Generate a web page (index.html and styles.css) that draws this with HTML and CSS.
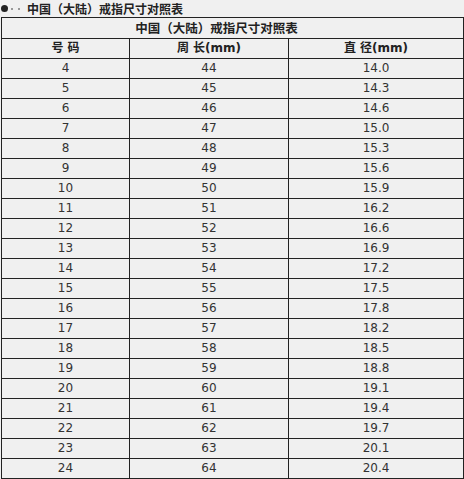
FILE: index.html
```html
<!DOCTYPE html>
<html lang="zh">
<head>
<meta charset="utf-8">
<title>中国（大陆）戒指尺寸对照表</title>
<link rel="stylesheet" href="styles.css">
</head>
<body>
<div class="heading">
  <span class="bullet"></span>
  <span class="dots"><i></i><i></i></span>
  <span class="heading-text">中国（大陆）戒指尺寸对照表</span>
</div>
<table class="size-table">
  <colgroup>
    <col class="c1"><col class="c2"><col class="c3">
  </colgroup>
  <thead>
    <tr class="caption-row"><th colspan="3">中国（大陆）戒指尺寸对照表</th></tr>
    <tr class="head-row"><th>号 码</th><th>周 长(mm)</th><th>直 径(mm)</th></tr>
  </thead>
  <tbody>
    <tr><td>4</td><td>44</td><td>14.0</td></tr>
    <tr><td>5</td><td>45</td><td>14.3</td></tr>
    <tr><td>6</td><td>46</td><td>14.6</td></tr>
    <tr><td>7</td><td>47</td><td>15.0</td></tr>
    <tr><td>8</td><td>48</td><td>15.3</td></tr>
    <tr><td>9</td><td>49</td><td>15.6</td></tr>
    <tr><td>10</td><td>50</td><td>15.9</td></tr>
    <tr><td>11</td><td>51</td><td>16.2</td></tr>
    <tr><td>12</td><td>52</td><td>16.6</td></tr>
    <tr><td>13</td><td>53</td><td>16.9</td></tr>
    <tr><td>14</td><td>54</td><td>17.2</td></tr>
    <tr><td>15</td><td>55</td><td>17.5</td></tr>
    <tr><td>16</td><td>56</td><td>17.8</td></tr>
    <tr><td>17</td><td>57</td><td>18.2</td></tr>
    <tr><td>18</td><td>58</td><td>18.5</td></tr>
    <tr><td>19</td><td>59</td><td>18.8</td></tr>
    <tr><td>20</td><td>60</td><td>19.1</td></tr>
    <tr><td>21</td><td>61</td><td>19.4</td></tr>
    <tr><td>22</td><td>62</td><td>19.7</td></tr>
    <tr><td>23</td><td>63</td><td>20.1</td></tr>
    <tr><td>24</td><td>64</td><td>20.4</td></tr>
  </tbody>
</table>
</body>
</html>
```
FILE: styles.css
```css
html, body {
  margin: 0;
  padding: 0;
  background: #f0f0f0;
}
body {
  font-family: "DejaVu Sans", "Noto Sans CJK SC", sans-serif;
  color: #333;
  width: 464px;
  overflow: hidden;
}
.heading {
  height: 17px;
  display: flex;
  align-items: center;
  padding-left: 1px;
}
.bullet {
  width: 7px;
  height: 7px;
  border-radius: 50%;
  background: #222;
  flex: none;
}
.dots {
  display: flex;
  gap: 5px;
  margin-left: 3px;
  margin-right: 7px;
}
.dots i {
  width: 2px;
  height: 2px;
  background: #999;
  display: block;
}
.heading-text {
  font-family: "Noto Sans CJK SC", sans-serif;
  font-weight: bold;
  font-size: 12px;
  color: #222;
  line-height: 17px;
}
.size-table {
  border-collapse: collapse;
  margin-left: 1px;
  width: 462px;
  table-layout: fixed;
}
.c1 { width: 128px; }
.c2 { width: 159px; }
.c3 { width: 175px; }
.size-table th,
.size-table td {
  border: 1px solid #222;
  padding: 0;
  text-align: center;
  height: 19px;
  line-height: 19px;
}
.size-table th {
  font-family: "Noto Sans CJK SC", sans-serif;
  font-weight: bold;
  font-size: 12px;
  color: #222;
}
.caption-row th {
  height: 20px;
  line-height: 20px;
  font-size: 12.5px;
  padding-right: 32px;
}
.head-row th {
  font-family: "DejaVu Sans", "Noto Sans CJK SC", sans-serif;
  font-size: 12px;
}
.size-table td {
  font-size: 12px;
  color: #333;
}
```
